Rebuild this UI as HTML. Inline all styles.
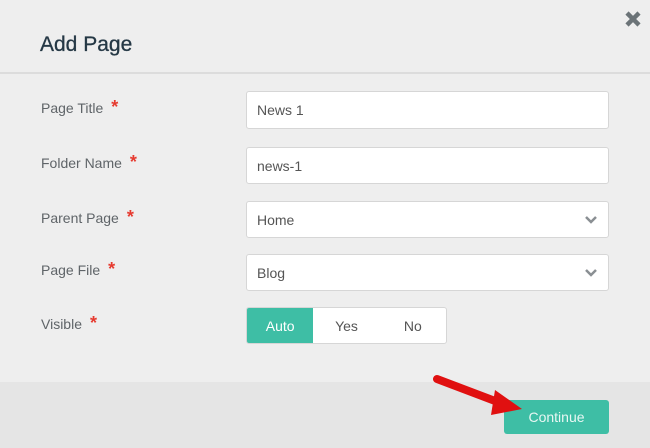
<!DOCTYPE html>
<html><head><style>
body{margin:0;width:650px;height:448px;background:#eeeeee;font-family:"Liberation Sans",sans-serif;position:relative;overflow:hidden}
.abs{position:absolute}
h1{position:absolute;left:40px;top:33px;margin:0;font-size:21px;font-weight:normal;color:#253845;-webkit-text-stroke:0.3px #253845}
.hr{left:0;top:72px;width:650px;height:2px;background:#dcdcdc}
.lbl{position:absolute;left:41px;font-size:14px;color:#5f6468}
.lbl b{color:#e63a2f;font-size:18px;margin-left:8px;font-weight:bold}
.in{position:absolute;left:246px;width:363px;background:#fff;border:1px solid #d6d6d6;border-radius:3px;font-size:14px;color:#555;box-sizing:border-box;padding-left:10px;display:flex;align-items:center}
.foot{left:0;top:382px;width:650px;height:66px;background:#e5e5e5}
</style></head><body>
<svg class="abs" style="left:624px;top:10px" width="18" height="18" viewBox="0 0 18 18"><path d="M3 3L15 15M15 3L3 15" stroke="#6b7377" stroke-width="4.5"/></svg>
<h1>Add Page</h1>
<div class="abs hr"></div>
<div class="lbl" style="top:97px">Page Title<b>*</b></div>
<div class="lbl" style="top:152px">Folder Name<b>*</b></div>
<div class="lbl" style="top:207px">Parent Page<b>*</b></div>
<div class="lbl" style="top:259px">Page File<b>*</b></div>
<div class="lbl" style="top:313px">Visible<b>*</b></div>
<div class="in" style="top:91px;height:38px">News 1</div>
<div class="in" style="top:147px;height:37px">news-1</div>
<div class="in" style="top:201px;height:37px">Home<svg class="abs" style="right:10px;top:13px" width="14" height="10"><path d="M2 2L7 7L12 2" stroke="#8a8f93" stroke-width="2.5" fill="none"/></svg></div>
<div class="in" style="top:254px;height:37px">Blog<svg class="abs" style="right:10px;top:13px" width="14" height="10"><path d="M2 2L7 7L12 2" stroke="#8a8f93" stroke-width="2.5" fill="none"/></svg></div>
<div class="in" style="top:307px;height:37px;width:201px;padding:0;font-size:14px">
<div style="width:67px;height:35px;background:#3ebea5;color:#fff;display:flex;align-items:center;justify-content:center;border-radius:2px 0 0 2px">Auto</div>
<div style="width:67px;text-align:center">Yes</div>
<div style="width:67px;text-align:center">No</div></div>
<div class="abs foot"></div>
<div class="abs" style="left:504px;top:400px;width:105px;height:34px;background:#3ebea5;border-radius:3px;color:#e8f7f3;font-size:14px;display:flex;align-items:center;justify-content:center">Continue</div>
<svg class="abs" style="left:425px;top:368px" width="110" height="50"><path d="M12 11L78 36" stroke="#e01010" stroke-width="8" stroke-linecap="round"/><path d="M70 22L97 41L66 47Z" fill="#e01010"/></svg>
</body></html>
